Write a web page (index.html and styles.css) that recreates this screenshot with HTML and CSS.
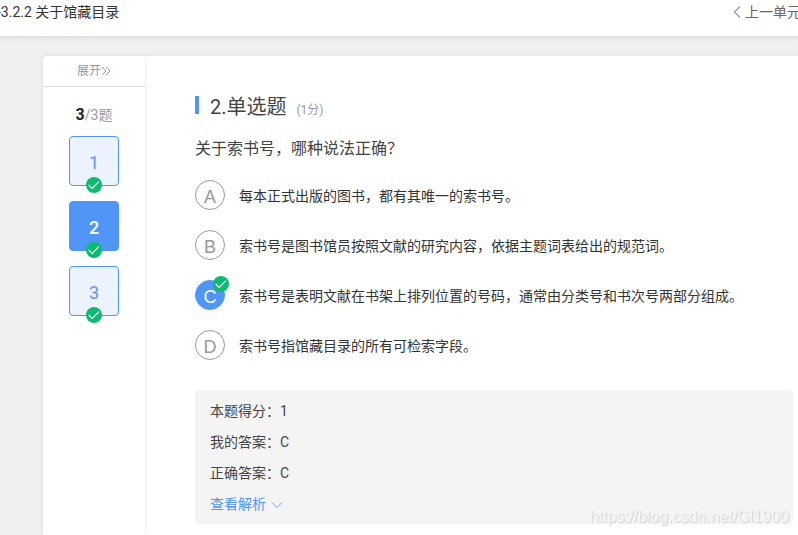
FILE: index.html
```html
<!DOCTYPE html>
<html lang="zh-CN">
<head>
<meta charset="utf-8">
<meta name="viewport" content="width=device-width, initial-scale=1">
<title>3.2.2 关于馆藏目录</title>
<link rel="stylesheet" href="styles.css">
</head>
<body>
<svg class="defs" aria-hidden="true">
  <symbol id="check" viewBox="0 0 16 16">
    <circle cx="8" cy="8" r="8" fill="#0bbb70"/>
    <path d="M2.700 8 6.200 11.400 13 4.600" fill="none" stroke="#fff" stroke-width="1.100"/>
  </symbol>
</svg>
<header class="topbar">
  <h1 class="unit-title">-3.2.2 关于馆藏目录</h1>
  <a class="prev" href="#">
    <svg class="prev-icon" viewBox="0 0 8 14" aria-hidden="true"><path d="M7 1.500 1.500 7 7 12.500"/></svg>上一单元
  </a>
</header>
<main class="panel">
  <nav class="sidebar" aria-label="题目">
    <button class="expand" type="button">展开<svg class="expand-icon" viewBox="0 0 10 10" aria-hidden="true"><path d="M1 .8 5 5 1 9.200M5 .8 9 5 5 9.200"/></svg></button>
    <p class="count"><b>3</b>/3题</p>
    <div class="numbers">
      <button class="number" type="button">1<svg class="badge" aria-hidden="true"><use href="#check"/></svg></button>
      <button class="number current" type="button">2<svg class="badge" aria-hidden="true"><use href="#check"/></svg></button>
      <button class="number" type="button">3<svg class="badge" aria-hidden="true"><use href="#check"/></svg></button>
    </div>
  </nav>
  <section class="content">
    <h2 class="kind">2.单选题 <small class="points">(1分)</small></h2>
    <p class="question" id="question">关于索书号，哪种说法正确？</p>
    <div class="options" role="radiogroup" aria-labelledby="question">
      <label class="option"><span class="mark"><input type="radio" name="answer" value="A"><span class="letter">A</span></span><span class="text">每本正式出版的图书，都有其唯一的索书号。</span></label>
      <label class="option"><span class="mark"><input type="radio" name="answer" value="B"><span class="letter">B</span></span><span class="text">索书号是图书馆员按照文献的研究内容，依据主题词表给出的规范词。</span></label>
      <label class="option"><span class="mark"><input type="radio" name="answer" value="C" checked><span class="letter">C</span><svg class="badge corner" aria-hidden="true"><use href="#check"/></svg></span><span class="text">索书号是表明文献在书架上排列位置的号码，通常由分类号和书次号两部分组成。</span></label>
      <label class="option"><span class="mark"><input type="radio" name="answer" value="D"><span class="letter">D</span></span><span class="text">索书号指馆藏目录的所有可检索字段。</span></label>
    </div>
    <div class="result">
      <p>本题得分：1</p>
      <p>我的答案：C</p>
      <p>正确答案：C</p>
      <a class="analysis" href="#">查看解析<svg class="down-icon" viewBox="0 0 12 8" aria-hidden="true"><path d="M1 1.500 6 6.500 11 1.500"/></svg></a>
    </div>
  </section>
</main>
<div class="watermark">https://blog.csdn.net/Gl1900</div>
</body>
</html>
```

FILE: styles.css
```css
* {
  box-sizing: border-box;
}

body {
  display: flex;
  flex-direction: column;
  min-height: 100vh;
  margin: 0;
  overflow-x: hidden;
  background: #f0f0f0;
  color: #333;
  font: 14px/20px Roboto, "Noto Sans CJK SC", sans-serif;
}

h1, h2, p {
  margin: 0;
  font-weight: 400;
}

button {
  padding: 0;
  border: 0;
  background: none;
  font: inherit;
  cursor: pointer;
}

a {
  text-decoration: none;
}

svg {
  fill: none;
}

.defs {
  position: absolute;
  width: 0;
  height: 0;
}

.topbar {
  display: flex;
  justify-content: space-between;
  height: 36px;
  padding-top: 2px;
  background: #fff;
  box-shadow: 0 1px 5px rgba(0, 0, 0, 0.12);
  white-space: nowrap;
}

.unit-title {
  margin-left: -3px;
  font-size: 14px;
  line-height: 20px;
}

.prev {
  display: flex;
  align-items: center;
  gap: 4px;
  height: 20px;
  margin-right: -3px;
  color: #666;
}

.prev-icon {
  width: 8px;
  height: 14px;
  stroke: #999;
  stroke-width: 1.2;
}

.panel {
  display: flex;
  flex: 1;
  margin: 20px 0 0 43px;
  border-radius: 4px 0 0 0;
  background: #fff;
  box-shadow: 0 0 5px rgba(0, 0, 0, 0.07);
}

.sidebar {
  display: flex;
  flex-direction: column;
  flex: 0 0 103px;
  align-items: center;
  border-right: 1px solid #f5f5f5;
  box-shadow: 1px 0 3px rgba(0, 0, 0, 0.04);
}

.expand {
  display: flex;
  align-items: center;
  justify-content: center;
  width: 100%;
  height: 31px;
  border-bottom: 1px solid #ddd;
  color: #999;
  font-size: 12px;
}

.expand-icon {
  width: 10px;
  height: 10px;
  stroke: #999;
}

.count {
  margin: 18px 0 11px;
  color: #999;
}

.count b {
  color: #222;
  font-size: 16px;
}

.numbers {
  display: grid;
  gap: 15px;
}

.number {
  position: relative;
  width: 50px;
  height: 50px;
  padding-top: 4px;
  border: 1px solid #4f96f6;
  border-radius: 4px;
  background: #ecf3fe;
  color: #6096f2;
  font-size: 18px;
}

.current {
  background: #4f96f6;
  color: #fff;
  font-weight: 500;
}

.badge {
  position: absolute;
  bottom: -8px;
  left: 16px;
  width: 16px;
  height: 16px;
}

.content {
  flex: 1;
  min-width: 0;
  padding: 40px 5px 11px 49px;
}

.kind {
  display: flex;
  align-items: center;
  height: 22px;
  color: #444;
  font-size: 20px;
}

.kind::before {
  align-self: flex-start;
  width: 4px;
  height: 18px;
  margin-right: 11px;
  background: #4f96f6;
  content: "";
}

.points {
  margin: 6px 0 0 10px;
  color: #999;
  font-size: 12px;
}

.question {
  margin: 19px 0;
  color: #444;
  font-size: 16px;
  line-height: 24px;
}

.options {
  display: grid;
  gap: 20px;
}

.option {
  display: flex;
  align-items: center;
  gap: 14px;
  min-height: 30px;
}

.text {
  padding-top: 2px;
}

.mark {
  position: relative;
  display: grid;
  flex: none;
  width: 30px;
  height: 30px;
  place-items: center;
}

.mark > input,
.letter {
  grid-area: 1 / 1;
}

.mark > input {
  width: 30px;
  height: 30px;
  margin: 0;
  border: 1px solid #999;
  border-radius: 50%;
  appearance: none;
}

.mark > input:checked {
  border-color: #4f96f6;
  background: #4f96f6;
}

.letter {
  z-index: 1;
  padding-top: 3px;
  color: #999;
  font-family: "Liberation Sans", Arial, sans-serif;
  font-size: 18px;
}

input:checked + .letter {
  color: #fff;
}

.corner {
  z-index: 2;
  top: -4px;
  bottom: auto;
  left: 18px;
}

.result {
  margin-top: 30px;
  padding: 6px 15px 4px;
  border-radius: 4px;
  background: #f4f4f4;
  color: #444;
  line-height: 31px;
}

.analysis {
  display: flex;
  align-items: center;
  gap: 5px;
  color: #4f96f6;
}

.down-icon {
  width: 12px;
  height: 8px;
  stroke: #6fa6f6;
}

.watermark {
  position: fixed;
  right: 9px;
  bottom: 8px;
  color: #f4f4f4;
  font: 16px/20px "Liberation Sans", Arial, sans-serif;
  text-shadow: 1px 1px 1px #d0d0d0;
  pointer-events: none;
}
```
